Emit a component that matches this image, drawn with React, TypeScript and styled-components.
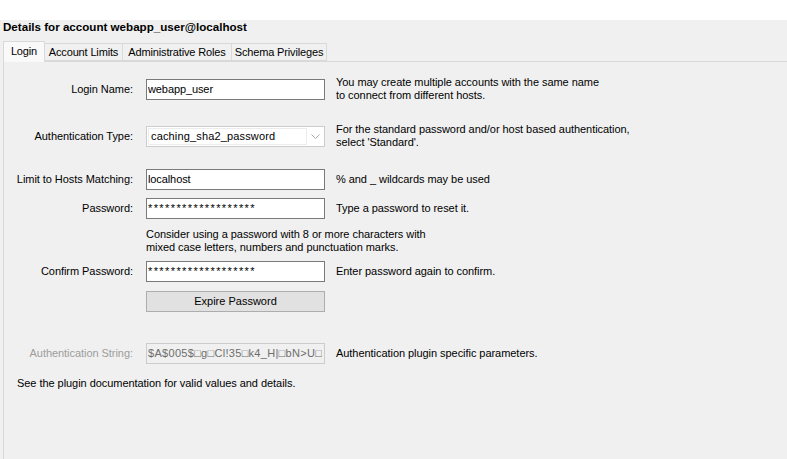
import React from 'react';
import styled, { createGlobalStyle } from 'styled-components';

const Global = createGlobalStyle`
  html, body { margin: 0; padding: 0; background: #ffffff; }
  body {
    font-family: "Liberation Sans", Arial, sans-serif;
    font-size: 11px;
    letter-spacing: -0.05px;
    color: #000000;
  }
  * { box-sizing: border-box; }
`;

const Window = styled.div`
  width: 787px;
  height: 459px;
  overflow: hidden;
  padding-top: 20px;
  background: #ffffff;
`;

const Surface = styled.div`
  height: 439px;
  background: #f0f0f0;
  display: flex;
  flex-direction: column;
`;

const Title = styled.h1`
  margin: 0;
  padding-left: 3px;
  font-size: 11.6px;
  font-weight: 700;
  letter-spacing: 0;
  line-height: 14px;
  height: 14px;
`;

const TabBar = styled.div`
  display: flex;
  align-items: flex-end;
  margin-top: 7px;
  padding-left: 3px;
  height: 20px;
  position: relative;
  z-index: 1;
`;

const Tab = styled.div<{ $active?: boolean; $w: number }>`
  width: ${(p) => p.$w}px;
  height: ${(p) => (p.$active ? 21 : 18)}px;
  margin-bottom: ${(p) => (p.$active ? -1 : 0)}px;
  border: 1px solid #d9d9d9;
  border-bottom: ${(p) => (p.$active ? 'none' : '1px solid #d9d9d9')};
  margin-left: ${(p) => (p.$active ? 0 : -1)}px;
  background: ${(p) => (p.$active ? '#f9f9f9' : '#f0f0f0')};
  display: flex;
  align-items: center;
  justify-content: center;
  padding-bottom: ${(p) => (p.$active ? 2 : 0)}px;
  letter-spacing: -0.15px;
  white-space: nowrap;
  &:first-child { margin-left: 0; }
`;

const Panel = styled.div`
  flex: 1;
  margin-left: 3px;
  border-top: 1px solid #d9d9d9;
  border-left: 1px solid #d9d9d9;
  background: #f0f0f0;
  padding-top: 15px;
`;

const Row = styled.div<{ $mt?: number }>`
  display: grid;
  grid-template-columns: 142px 179px 1fr;
  align-items: center;
  height: 21px;
  margin-top: ${(p) => p.$mt ?? 0}px;
`;

const NoteRow = styled.div<{ $mt?: number }>`
  display: grid;
  grid-template-columns: 142px 1fr;
  height: 26px;
  margin-top: ${(p) => p.$mt ?? 0}px;
`;

const Label = styled.div<{ $disabled?: boolean }>`
  text-align: right;
  padding-right: 13px;
  white-space: nowrap;
  line-height: 21px;
  color: ${(p) => (p.$disabled ? '#9d9d9d' : '#000000')};
`;

const Desc = styled.div<{ $twoLine?: boolean }>`
  padding-left: 11px;
  line-height: 13px;
  white-space: nowrap;
  align-self: ${(p) => (p.$twoLine ? 'start' : 'center')};
  margin-top: ${(p) => (p.$twoLine ? -1 : 0)}px;
  height: ${(p) => (p.$twoLine ? 26 : 13)}px;
`;

const Note = styled.div`
  grid-column: 2;
  line-height: 13px;
  white-space: nowrap;
`;

const TextBox = styled.input<{ $secret?: boolean }>`
  width: 179px;
  height: 21px;
  margin: 0;
  border: 1px solid #7a7a7a;
  border-radius: 0;
  background: #ffffff;
  padding: 0 2px 1px 1px;
  font: inherit;
  letter-spacing: ${(p) => (p.$secret ? '1.4px' : '-0.1px')};
  color: #000000;
  outline: none;
  &:disabled {
    border-color: #cccccc;
    background: #f0f0f0;
    color: #6d6d6d;
    letter-spacing: 0.3px;
  }
`;

const Combo = styled.div`
  width: 179px;
  height: 21px;
  border: 1px solid #cccccc;
  background: #ffffff;
  display: flex;
  align-items: center;
  padding: 1px;
`;

const ComboField = styled.div`
  width: 159px;
  height: 17px;
  border: 1px solid #ececec;
  padding-left: 2px;
  line-height: 15px;
  letter-spacing: 0.15px;
`;

const ComboArrow = styled.div`
  flex: 1;
  display: flex;
  align-items: center;
  justify-content: center;
`;

const Button = styled.button`
  width: 179px;
  height: 21px;
  margin: 0;
  border: 1px solid #adadad;
  background: #e1e1e1;
  font: inherit;
  color: #000000;
  padding: 0 0 1px;
`;

const Footer = styled.div`
  margin-top: 13px;
  padding-left: 13px;
  line-height: 13px;
`;

const Chevron = () => (
  <svg width="9" height="6" viewBox="0 0 9 6">
    <path d="M0.5 0.5 L4.5 4.5 L8.5 0.5" fill="none" stroke="#a8a8a8" strokeWidth="1" />
  </svg>
);

export default function App() {
  return (
    <>
      <Global />
      <Window>
        <Surface>
          <Title>Details for account webapp_user@localhost</Title>
          <TabBar>
            <Tab $active $w={42}>Login</Tab>
            <Tab $w={79}>Account Limits</Tab>
            <Tab $w={110}>Administrative Roles</Tab>
            <Tab $w={96}>Schema Privileges</Tab>
          </TabBar>
          <Panel>
            <Row>
              <Label>Login Name:</Label>
              <TextBox readOnly defaultValue="webapp_user" />
              <Desc $twoLine>
                You may create multiple accounts with the same name
                <br />
                to connect from different hosts.
              </Desc>
            </Row>
            <Row $mt={26}>
              <Label>Authentication Type:</Label>
              <Combo>
                <ComboField>caching_sha2_password</ComboField>
                <ComboArrow>
                  <Chevron />
                </ComboArrow>
              </Combo>
              <Desc $twoLine>
                For the standard password and/or host based authentication,
                <br />
                select 'Standard'.
              </Desc>
            </Row>
            <Row $mt={24}>
              <Label>Limit to Hosts Matching:</Label>
              <TextBox readOnly defaultValue="localhost" />
              <Desc>% and _ wildcards may be used</Desc>
            </Row>
            <Row $mt={8}>
              <Label>Password:</Label>
              <TextBox readOnly $secret defaultValue="*******************" />
              <Desc>Type a password to reset it.</Desc>
            </Row>
            <NoteRow $mt={9}>
              <Note>
                Consider using a password with 8 or more characters with
                <br />
                mixed case letters, numbers and punctuation marks.
              </Note>
            </NoteRow>
            <Row $mt={7}>
              <Label>Confirm Password:</Label>
              <TextBox readOnly $secret defaultValue="*******************" />
              <Desc>Enter password again to confirm.</Desc>
            </Row>
            <Row $mt={9}>
              <span />
              <Button type="button">Expire Password</Button>
            </Row>
            <Row $mt={31}>
              <Label $disabled>Authentication String:</Label>
              <TextBox disabled defaultValue={'$A$005$\u25A1g\u25A1Cl!35\u25A1k4_H|\u25A1bN>U\u25A1x'} />
              <Desc>Authentication plugin specific parameters.</Desc>
            </Row>
            <Footer>See the plugin documentation for valid values and details.</Footer>
          </Panel>
        </Surface>
      </Window>
    </>
  );
}
